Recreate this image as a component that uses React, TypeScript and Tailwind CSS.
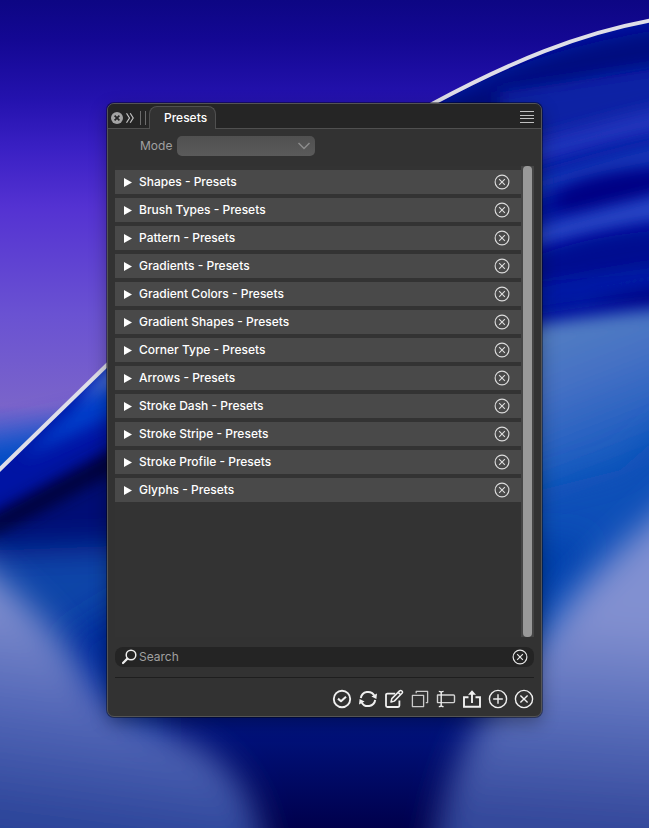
import React, { useState } from 'react';

const PRESETS = [
  'Shapes',
  'Brush Types',
  'Pattern',
  'Gradients',
  'Gradient Colors',
  'Gradient Shapes',
  'Corner Type',
  'Arrows',
  'Stroke Dash',
  'Stroke Stripe',
  'Stroke Profile',
  'Glyphs',
];

const Wallpaper: React.FC = () => (
  <svg
    className="absolute inset-0 h-full w-full"
    viewBox="0 0 649 828"
    preserveAspectRatio="xMidYMid slice"
    aria-hidden="true"
  >
    <defs>
      <linearGradient id="sky" x1="0" y1="0" x2="0" y2="1">
        <stop offset="0" stopColor="#0d0684" />
        <stop offset="0.05" stopColor="#140894" />
        <stop offset="0.12" stopColor="#2412ae" />
        <stop offset="0.18" stopColor="#3a20c4" />
        <stop offset="0.25" stopColor="#5432d2" />
        <stop offset="0.38" stopColor="#6a52d2" />
        <stop offset="0.49" stopColor="#7a64ca" />
        <stop offset="0.54" stopColor="#3c60d0" />
        <stop offset="0.58" stopColor="#0850c8" />
      </linearGradient>
      <linearGradient id="deep" gradientUnits="userSpaceOnUse" x1="0" y1="500" x2="0" y2="828">
        <stop offset="0" stopColor="#0844a6" />
        <stop offset="0.35" stopColor="#0636a4" />
        <stop offset="0.6" stopColor="#00188c" />
        <stop offset="1" stopColor="#00004c" />
      </linearGradient>
      <linearGradient id="petalLeft" gradientUnits="userSpaceOnUse" x1="60" y1="590" x2="30" y2="828">
        <stop offset="0" stopColor="#8694d2" />
        <stop offset="0.5" stopColor="#5468b8" />
        <stop offset="1" stopColor="#2a4398" />
      </linearGradient>
      <linearGradient id="petalRight" gradientUnits="userSpaceOnUse" x1="610" y1="530" x2="590" y2="828">
        <stop offset="0" stopColor="#7f90d2" />
        <stop offset="0.3" stopColor="#8290d0" />
        <stop offset="0.65" stopColor="#566bb8" />
        <stop offset="1" stopColor="#33479a" />
      </linearGradient>
      <linearGradient id="slope" gradientUnits="userSpaceOnUse" x1="550" y1="320" x2="620" y2="500">
        <stop offset="0" stopColor="#5580c2" />
        <stop offset="0.35" stopColor="#4470c4" />
        <stop offset="0.75" stopColor="#1c5cc0" />
        <stop offset="1" stopColor="#0850b8" />
      </linearGradient>
      <clipPath id="hill">
        <path d="M0 469 L107 365 C220 260 330 155 432 104 C510 62 580 33 649 20 V828 H0Z" />
      </clipPath>
      <filter id="soft" x="-30%" y="-40%" width="160%" height="180%">
        <feGaussianBlur stdDeviation="8" />
      </filter>
      <filter id="softer" x="-30%" y="-30%" width="160%" height="160%">
        <feGaussianBlur stdDeviation="16" />
      </filter>
    </defs>
    <rect width="649" height="828" fill="url(#sky)" />
    <path d="M-40 452 L120 416 V520 H-40Z" fill="#064cc4" filter="url(#softer)" />
    <g clipPath="url(#hill)">
      <rect width="649" height="828" fill="url(#deep)" />
      <path d="M-20 480 L150 310 V600 H-20Z" fill="#0014a4" />
      <path d="M20 460 L150 330 V400 L40 450Z" fill="#003cca" filter="url(#soft)" />
      <path d="M76 404 L150 326 V374 L100 390Z" fill="#6080dc" filter="url(#soft)" />
      <path d="M-40 536 L150 436 V650 H-40Z" fill="#000c74" filter="url(#soft)" />
      <path d="M-40 534 L150 430 V452 L-40 554Z" fill="#000034" filter="url(#soft)" />
      <path d="M-60 552 C20 550 90 546 170 544 V690 H-60Z" fill="#0844a8" filter="url(#softer)" />
      <path d="M60 640 L160 580 V760 H100Z" fill="#002a9c" filter="url(#softer)" />

      <path d="M420 80 L680 0 V340 H420Z" fill="#0014a0" />
      <path d="M430 110 C510 62 580 40 700 24 V62 C600 70 540 94 480 130Z" fill="#000f80" filter="url(#soft)" />
      <path d="M500 92 L700 62 V112 L500 150Z" fill="#0820a4" filter="url(#soft)" />
      <path d="M500 150 C580 130 620 114 700 100 V126 C620 140 580 152 500 174Z" fill="#2134bc" filter="url(#soft)" />
      <path d="M500 186 C580 164 620 150 700 134 V158 C610 174 570 184 500 206Z" fill="#1538b8" filter="url(#soft)" />
      <path d="M556 194 C590 176 610 172 700 168 V188 C620 200 590 212 556 212Z" fill="#000684" filter="url(#soft)" />
      <path d="M500 238 C580 214 620 206 700 186 V212 C620 224 580 234 500 256Z" fill="#2a48c8" filter="url(#soft)" />
      <path d="M530 258 C590 236 620 234 700 226 V270 L530 282Z" fill="#000e90" filter="url(#soft)" />
      <path d="M500 296 C580 280 620 270 700 262 V282 L500 312Z" fill="#001ca6" filter="url(#soft)" />
      <path d="M560 308 C600 300 620 294 700 282 V304 H560Z" fill="#000680" filter="url(#soft)" />

      <path d="M500 330 C560 322 600 314 700 306 V700 H500Z" fill="url(#slope)" filter="url(#soft)" />
      <path d="M500 500 L620 470 L700 400 V560 L500 700Z" fill="#0850b8" filter="url(#softer)" />
      <path d="M500 540 L590 540 L540 620 L480 720Z" fill="#0440ac" filter="url(#softer)" />
      <path
        d="M-60 536 C20 590 62 634 90 684 C118 722 170 728 208 752 C246 780 260 810 274 890 H-60Z"
        fill="url(#petalLeft)"
        filter="url(#softer)"
      />
      <path
        d="M720 460 C650 520 585 575 550 630 C500 690 444 742 426 890 H720Z"
        fill="url(#petalRight)"
        filter="url(#softer)"
      />
    </g>
    <path
      d="M-4 473 L107 365 C220 260 330 155 432 104 C510 62 580 33 653 20"
      fill="none"
      stroke="#dedee8"
      strokeWidth="4"
    />
  </svg>
);

type IconProps = { children: React.ReactNode; className?: string; width?: number };

const Icon: React.FC<IconProps> = ({ children, className = 'h-5 w-5', width = 1.4 }) => (
  <svg
    className={className}
    viewBox="0 0 20 20"
    fill="none"
    stroke="currentColor"
    strokeWidth={width}
    strokeLinejoin="round"
    aria-hidden="true"
  >
    {children}
  </svg>
);

const CircleX: React.FC<{ className?: string; width?: number }> = ({ className, width }) => (
  <Icon className={className} width={width}>
    <circle cx="10" cy="10" r="8.6" />
    <path d="M6.4 6.4l7.2 7.2M13.6 6.4l-7.2 7.2" />
  </Icon>
);

const TOOLS = [
  {
    label: 'Apply',
    icon: (
      <Icon width={1.9}>
        <circle cx="10" cy="10" r="8.2" />
        <path d="M6 9.6l3 2.6 5-4.4" strokeWidth="2.1" />
      </Icon>
    ),
  },
  {
    label: 'Refresh',
    icon: (
      <Icon width={2}>
        <path d="M2.8 9A7.3 7.3 0 0 1 16.3 6.6M17.2 11A7.3 7.3 0 0 1 3.7 13.4" />
        <path d="M19 4.4l-.6 5.6-5-2.6zM1 15.6l.6-5.6 5 2.6z" fill="currentColor" stroke="none" />
      </Icon>
    ),
  },
  {
    label: 'Edit',
    icon: (
      <Icon width={1.8}>
        <path d="M11.2 4.6H3.4A1.4 1.4 0 0 0 2 6v10.6A1.4 1.4 0 0 0 3.4 18H14a1.4 1.4 0 0 0 1.4-1.4v-5" />
        <path d="M7 13l.8-3.4 7.8-7.7c1.5-1.3 3.8.8 2.4 2.4l-7.7 7.8L7 13zM14.2 3.4l2.4 2.4" strokeWidth="1.5" />
      </Icon>
    ),
  },
  {
    label: 'Duplicate',
    icon: (
      <Icon width={1.3}>
        <path d="M2.4 6.4h11.2v11.2H2.4zM6.2 4.2V2.4h11.4v11.2h-1.8" opacity="0.8" />
      </Icon>
    ),
  },
  {
    label: 'Rename',
    icon: (
      <Icon width={1.4}>
        <path d="M5.2 6H1.5v7.6h3.7M5.2 6h12.3a1 1 0 0 1 1 1v5.6a1 1 0 0 1-1 1H5.2" opacity="0.85" />
        <path d="M5.2 3v14M2.8 2.4c1.4 0 2.4.3 2.4 1.4 0-1.1 1-1.4 2.4-1.4M2.8 17.6c1.4 0 2.4-.3 2.4-1.4 0 1.1 1 1.4 2.4 1.4" />
      </Icon>
    ),
  },
  {
    label: 'Export',
    icon: (
      <Icon width={1.9}>
        <path d="M6.5 8.2H2v9.6h16V8.2h-4.5M10 14V4" strokeLinejoin="miter" />
        <path d="M10 1.2L14 5.8H6z" fill="currentColor" stroke="none" />
      </Icon>
    ),
  },
  {
    label: 'Add',
    icon: (
      <Icon>
        <circle cx="10" cy="10" r="8.6" />
        <path d="M10 5.2v9.6M5.2 10h9.6" />
      </Icon>
    ),
  },
  { label: 'Delete', icon: <CircleX /> },
];

const PresetRow: React.FC<{ name: string }> = ({ name }) => (
  <li className="flex h-6 items-center bg-[#494949] pr-[11px]">
    <button type="button" aria-expanded={false} className="flex h-6 flex-1 items-center gap-[7px] pl-[9px] text-left">
      <svg className="h-[9px] w-2" viewBox="0 0 8 9" fill="currentColor" aria-hidden="true">
        <path d="M0 0l8 4.5L0 9z" />
      </svg>
      {name} - Presets
    </button>
    <button type="button" aria-label={`Remove ${name}`} className="text-[#dcdcdc]">
      <CircleX className="h-4 w-4" width={1.4} />
    </button>
  </li>
);

const App: React.FC = () => {
  const [query, setQuery] = useState('');

  return (
    <main className="relative flex min-h-screen items-center justify-center overflow-hidden bg-[#0a2a9c] pb-2 font-['Inter',sans-serif] text-xs font-medium text-white">
      <Wallpaper />
      <section className="relative w-full max-w-[435px] overflow-hidden rounded-[7px] border border-[#545454] bg-[#323232] shadow-[0_0_0_1px_#00000066,0_6px_18px_#00000055]">
        <header className="flex h-[25px] items-end border-b border-[#505050] bg-[#252525] pr-[7px]">
          <div className="flex h-full items-center gap-[3px] pt-[3px] pl-[3px]">
            <button type="button" aria-label="Close">
              <svg className="h-3 w-3" viewBox="0 0 12 12" aria-hidden="true">
                <circle cx="6" cy="6" r="6" fill="#a3a3a3" />
                <path d="M3.6 3.6l4.8 4.8M8.4 3.6L3.6 8.4" stroke="#252525" strokeWidth="1.7" />
              </svg>
            </button>
            <button type="button" aria-label="Collapse">
              <svg className="h-3 w-2" viewBox="0 0 8 12" fill="none" stroke="#c4c4c4" strokeWidth="1.2" aria-hidden="true">
                <path d="M.5 1.2L3.5 6l-3 4.8M4.2 1.2L7.2 6l-3 4.8" />
              </svg>
            </button>
            <span className="ml-[3px] h-3.5 w-1.5 border-x border-[#6c6c6c]" />
          </div>
          <h1 className="-mb-px ml-[3px] flex h-[23px] w-[67px] items-center rounded-t-lg border border-b-0 border-[#505050] bg-[#323232] pl-3.5">
            Presets
          </h1>
          <button type="button" aria-label="Panel menu" className="mb-1 ml-auto">
            <svg className="h-3.5 w-3.5" viewBox="0 0 14 14" stroke="#c0c0c0" aria-hidden="true">
              <path d="M0 1.5h14M0 5.5h14M0 8.5h14M0 12.5h14" />
            </svg>
          </button>
        </header>

        <div className="px-[7px] pt-[7px]">
          <div className="flex items-center gap-[5px] pl-[25px] text-[#a0a0a0]">
            <label htmlFor="mode" className="font-normal">
              Mode
            </label>
            <div className="relative">
              <select
                id="mode"
                className="block h-5 w-[138px] appearance-none rounded-[5px] bg-linear-to-b from-[#505050] to-[#5a5a5a]"
              >
                <option></option>
              </select>
              <svg
                className="pointer-events-none absolute top-1.5 right-1 h-2 w-3.5"
                viewBox="0 0 14 8"
                fill="none"
                stroke="#8c8c8c"
                strokeWidth="1.5"
                aria-hidden="true"
              >
                <path d="M1.5 1L7 6.5 12.5 1" />
              </svg>
            </div>
          </div>

          <div className="mt-2.5 flex min-h-[471px] bg-[#333333]">
            <ul className="flex flex-1 flex-col gap-1 pt-1">
              {PRESETS.map((name) => (
                <PresetRow key={name} name={name} />
              ))}
            </ul>
            <div className="flex w-[13px] justify-center bg-[#454545]">
              <div className="w-[9px] rounded-sm bg-[#999999]" />
            </div>
          </div>

          <label className="mt-2.5 flex h-5 items-center gap-0.5 rounded-lg bg-[#242424] px-1.5">
            <svg className="h-4 w-4" viewBox="0 0 16 16" fill="none" stroke="#eeeeee" aria-hidden="true">
              <circle cx="10" cy="6" r="4.8" strokeWidth="1.5" />
              <path d="M6.4 9.6L2 14" strokeWidth="2.2" strokeLinecap="round" />
            </svg>
            <input
              type="text"
              aria-label="Search presets"
              placeholder="Search"
              value={query}
              onChange={(e) => setQuery(e.target.value)}
              className="min-w-0 flex-1 bg-transparent font-normal outline-none placeholder:text-[#a0a0a0]"
            />
            <button type="button" aria-label="Clear search" onClick={() => setQuery('')} className="text-[#e6e6e6]">
              <CircleX className="h-4 w-4" width={1.5} />
            </button>
          </label>

          <hr className="mt-2.5 border-[#1e1e1e]" />

          <footer className="flex justify-end gap-1.5 pt-[11px] pb-[7px] text-[#f0f0f0]">
            {TOOLS.map((tool) => (
              <button key={tool.label} type="button" aria-label={tool.label}>
                {tool.icon}
              </button>
            ))}
          </footer>
        </div>
      </section>
    </main>
  );
};

export default App;
